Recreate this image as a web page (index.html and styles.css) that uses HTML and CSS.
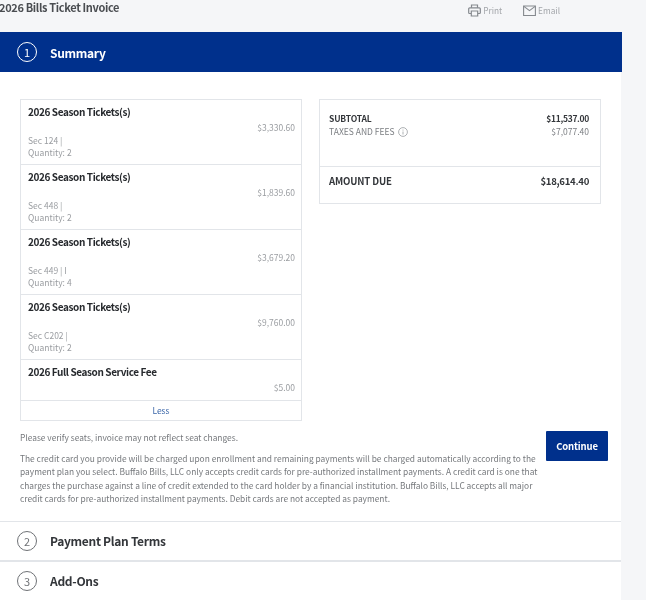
FILE: index.html
```html
<!DOCTYPE html>
<html lang="en">
<head>
<meta charset="utf-8">
<title>2026 Bills Ticket Invoice</title>
<link rel="stylesheet" href="styles.css">
</head>
<body>
<header class="topbar">
  <h1 class="page-title">2026 Bills Ticket Invoice</h1>
  <div class="actions">
    <span class="action">
      <svg class="action-icon" viewBox="0 0 13 13" fill="none" stroke="#85898e" stroke-width="1.200"><path d="M3.500 3.800V1h6v2.800"/><path d="M3 9.500H1.500a.8.8 0 0 1-.8-.8V4.800a1 1 0 0 1 1-1h9.600a1 1 0 0 1 1 1v3.900a.8.8 0 0 1-.8.8H10"/><path d="M3.300 7h6.400v5H3.300z"/></svg>
      Print
    </span>
    <span class="action">
      <svg class="action-icon" viewBox="0 0 13 13" fill="none" stroke="#85898e" stroke-width="1.100"><path d="M.6 2h11.800v9.500H.6z"/><path d="M.9 2.400l5.600 4.200 5.600-4.200"/></svg>
      Email
    </span>
  </div>
</header>
<main class="panel">
  <section class="step step-active">
    <span class="step-num">1</span>
    <h2 class="step-title">Summary</h2>
  </section>
  <div class="summary">
    <div class="columns">
      <div class="items card">
        <div class="item">
          <div class="item-name">2026 Season Tickets(s)</div>
          <div class="item-price">$3,330.60</div>
          <div class="item-meta">Sec 124 |</div>
          <div class="item-meta">Quantity: 2</div>
        </div>
        <div class="item">
          <div class="item-name">2026 Season Tickets(s)</div>
          <div class="item-price">$1,839.60</div>
          <div class="item-meta">Sec 448 |</div>
          <div class="item-meta">Quantity: 2</div>
        </div>
        <div class="item">
          <div class="item-name">2026 Season Tickets(s)</div>
          <div class="item-price">$3,679.20</div>
          <div class="item-meta">Sec 449 | I</div>
          <div class="item-meta">Quantity: 4</div>
        </div>
        <div class="item">
          <div class="item-name">2026 Season Tickets(s)</div>
          <div class="item-price">$9,760.00</div>
          <div class="item-meta">Sec C202 |</div>
          <div class="item-meta">Quantity: 2</div>
        </div>
        <div class="item item-fee">
          <div class="item-name">2026 Full Season Service Fee</div>
          <div class="item-price">$5.00</div>
        </div>
        <div class="less">Less</div>
      </div>
      <div class="totals card">
        <div class="totals-top">
          <div class="total-row strong"><span>SUBTOTAL</span><span class="num">$11,537.00</span></div>
          <div class="total-row">
            <span class="with-info">TAXES AND FEES
              <svg class="info" viewBox="0 0 10 10" fill="none" stroke="#8b8f94" stroke-width=".7"><circle cx="5" cy="5" r="4.400"/><path d="M5 4.500v3M5 2.600v1"/></svg>
            </span>
            <span>$7,077.40</span>
          </div>
        </div>
        <div class="total-row due"><span>AMOUNT DUE</span><span class="num">$18,614.40</span></div>
      </div>
    </div>
    <div class="legal">
      <div class="legal-text">
        <p class="verify">Please verify seats, invoice may not reflect seat changes.</p>
        <p class="terms">The credit card you provide will be charged upon enrollment and remaining payments will be charged automatically according to the payment plan you select. Buffalo Bills, LLC only accepts credit cards for pre-authorized installment payments. A credit card is one that charges the purchase against a line of credit extended to the card holder by a financial institution. Buffalo Bills, LLC accepts all major credit cards for pre-authorized installment payments. Debit cards are not accepted as payment.</p>
      </div>
      <button class="continue" type="button">Continue</button>
    </div>
  </div>
  <section class="step step-plan">
    <span class="step-num">2</span>
    <h2 class="step-title">Payment Plan Terms</h2>
  </section>
  <section class="step step-addons">
    <span class="step-num">3</span>
    <h2 class="step-title">Add-Ons</h2>
  </section>
</main>
</body>
</html>
```

FILE: styles.css
```css
* { box-sizing: border-box; }
html, body { margin: 0; padding: 0; }
body {
  width: 646px;
  height: 600px;
  overflow: hidden;
  background: #f5f6f8;
  font-family: "Noto Sans CJK JP", "Noto Sans", sans-serif;
  color: #2c2f33;
  filter: blur(0.3px);
}
.topbar {
  height: 32px;
  width: 622px;
  display: flex;
  justify-content: space-between;
  align-items: flex-start;
}
.page-title {
  margin: 0 0 0 -1px;
  font-size: 11px;
  line-height: 15px;
  font-weight: 700;
  letter-spacing: -0.35px;
  color: #4a4d51;
}
.actions {
  display: flex;
  gap: 21px;
  margin: 3px 62px 0 0;
}
.action {
  display: flex;
  align-items: center;
  gap: 2px;
  font-size: 8.300px;
  line-height: 14px;
  color: #a3a6aa;
}
.action-icon { width: 13px; height: 13px; }
.panel {
  width: 621px;
  background: #fff;
}
.step {
  display: flex;
  align-items: center;
  gap: 13px;
  padding-left: 17px;
}
.step-num {
  width: 20px;
  height: 20px;
  border: 1px solid #6f7276;
  border-radius: 50%;
  display: flex;
  align-items: center;
  justify-content: center;
  font-size: 11px;
  line-height: 1;
  color: #6f7276;
}
.step-title {
  margin: 0;
  font-size: 12px;
  line-height: 18px;
  font-weight: 700;
  letter-spacing: -0.3px;
  color: #33363a;
}
.step-active {
  width: 622px;
  height: 40px;
  background: #00308c;
}
.step-active .step-num { border-color: #fff; color: #fff; }
.step-active .step-title { color: #fff; margin-top: 2px; }
.summary { padding: 27px 13px 0 20px; }
.columns {
  display: flex;
  align-items: flex-start;
  gap: 17px;
  padding-right: 7px;
}
.card {
  width: 282px;
  border: 1px solid #e2e5e9;
  background: #fff;
}
.item {
  height: 65px;
  padding: 4px 6px 0 7px;
  border-bottom: 1px solid #e2e5e9;
}
.item-name {
  font-size: 10px;
  line-height: 15px;
  font-weight: 700;
  letter-spacing: -0.4px;
  color: #26292d;
}
.item-price {
  margin: 2px 0 0;
  text-align: right;
  font-size: 8.500px;
  line-height: 13px;
  color: #9a9da1;
}
.item-meta {
  font-size: 8.500px;
  line-height: 12px;
  color: #9a9da1;
}
.item-fee { height: 41px; }
.less {
  height: 19px;
  text-align: center;
  font-size: 8.500px;
  line-height: 19px;
  color: #3a66a8;
}
.totals { height: 105px; }
.totals-top {
  height: 67px;
  padding: 12px 11px 0 9px;
  border-bottom: 1px solid #e2e5e9;
}
.total-row {
  display: flex;
  justify-content: space-between;
  font-size: 8.500px;
  line-height: 13px;
  color: #7b7e82;
}
.total-row.strong {
  color: #33363a;
  font-weight: 700;
  letter-spacing: -0.15px;
}
.total-row .num { letter-spacing: -0.3px; }
.with-info { display: flex; align-items: center; gap: 3px; }
.info { width: 10px; height: 10px; }
.total-row.due {
  padding: 7px 11px 0 9px;
  font-size: 9.600px;
  line-height: 15px;
  font-weight: 700;
  letter-spacing: -0.15px;
  color: #33363a;
}
.legal {
  display: flex;
  align-items: flex-start;
  gap: 5px;
  min-height: 100px;
  padding-top: 10px;
}
.legal-text { flex: 1; min-width: 0; }
.verify, .terms {
  margin: 0;
  font-size: 8.400px;
  line-height: 13.500px;
  color: #75787c;
}
.verify { margin-bottom: 7px; }
.continue {
  flex: none;
  width: 62px;
  height: 30px;
  border: 0;
  border-radius: 1px;
  padding: 0;
  background: #00308c;
  color: #fff;
  font: 700 9.500px/30px "Noto Sans CJK JP", "Noto Sans", sans-serif;
  letter-spacing: -0.15px;
}
.step-plan {
  height: 39px;
  border-top: 1px solid #e2e5e9;
}
.step-addons {
  height: 40px;
  border-top: 2px solid #e2e5e9;
}
```
